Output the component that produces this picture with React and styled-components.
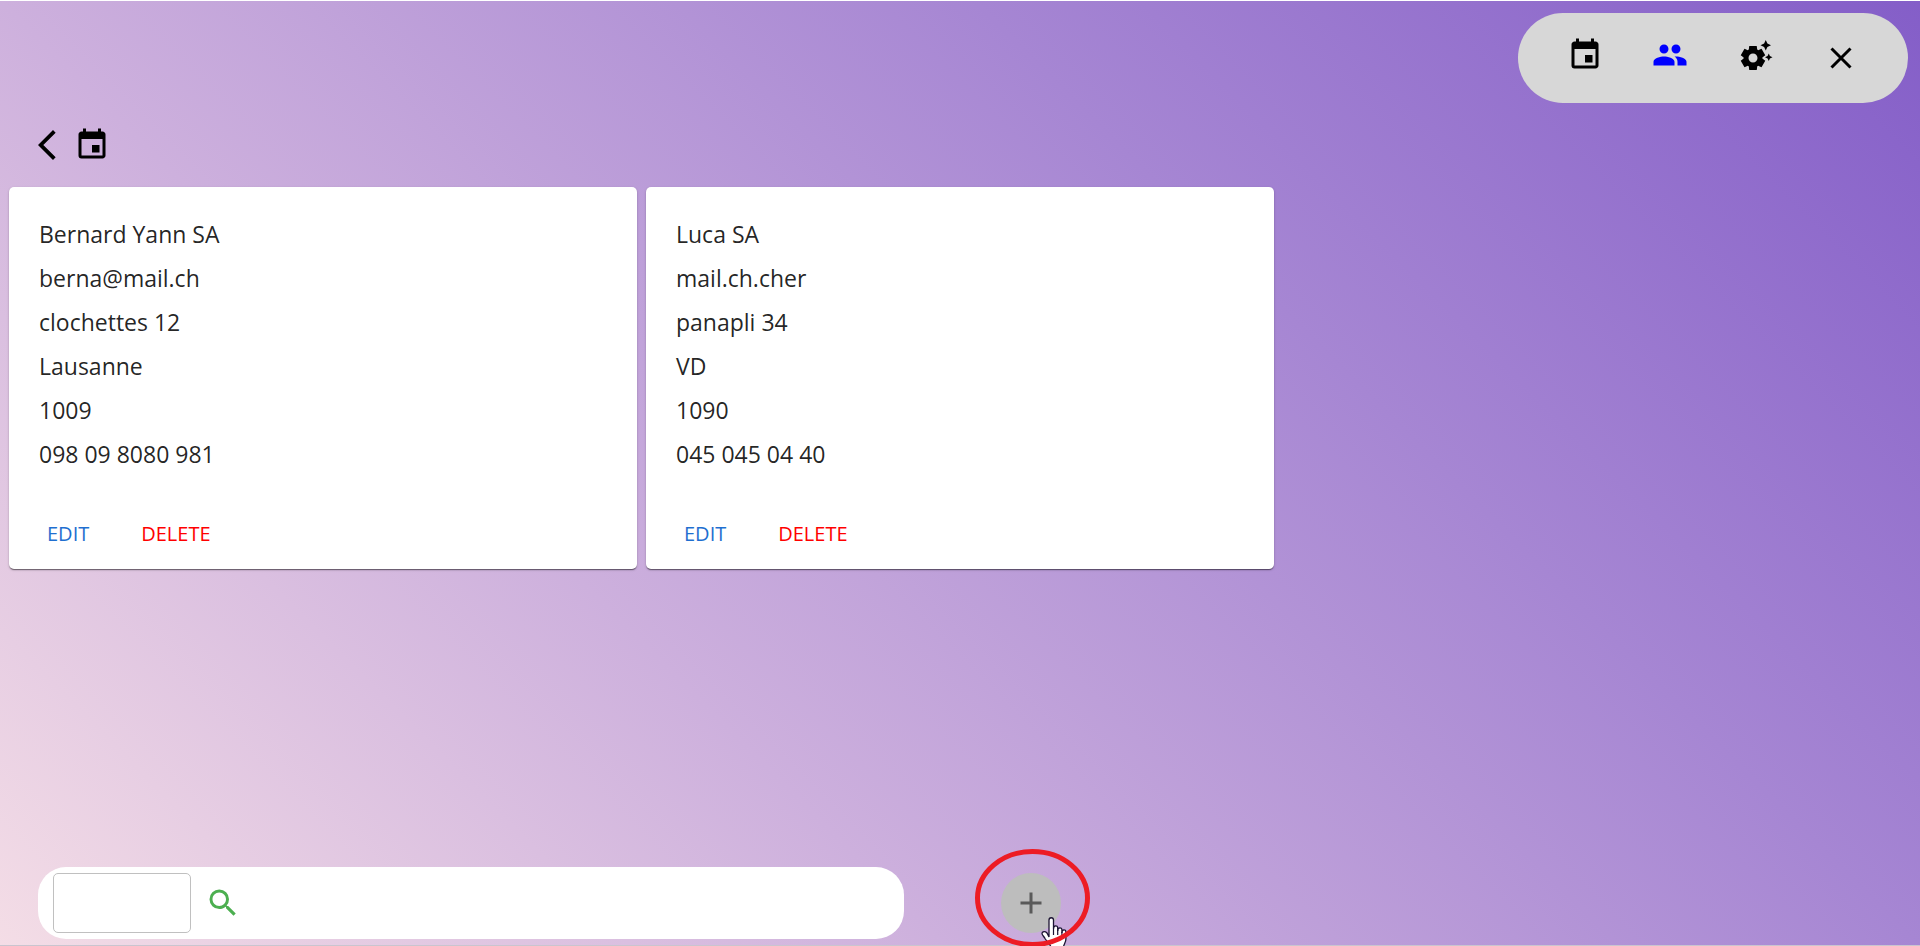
import React from "react";
import styled, { createGlobalStyle } from "styled-components";
import {
  MdAdd,
  MdArrowBackIosNew,
  MdEvent,
  MdPeople,
  MdSearch,
  MdSettingsSuggest,
} from "react-icons/md";

const GlobalStyle = createGlobalStyle`
  *, *::before, *::after { box-sizing: border-box; }
  body {
    margin: 0;
    font-family: "Open Sans", "Noto Sans", sans-serif;
    color: rgba(0, 0, 0, 0.87);
  }
  svg { display: block; }
`;

const Page = styled.div`
  min-height: 100vh;
  display: flex;
  flex-direction: column;
  border-top: 1px solid #fff;
  border-bottom: 1px solid #c9c5cf;
  background: linear-gradient(45deg, #f4dde6 0%, #cdb0dd 33%, #a686d3 67%, #845ec8 100%);
`;

const TopBar = styled.header`
  display: flex;
  justify-content: flex-end;
  padding: 12px 12px 0;
`;

const NavPill = styled.nav`
  display: flex;
  align-items: center;
  justify-content: space-between;
  width: 390px;
  height: 90px;
  padding: 0 49px 6px;
  border-radius: 45px;
  background: #d7d7d7;
`;

const IconButton = styled.button`
  padding: 0;
  border: 0;
  background: none;
  font-size: 36px;
  line-height: 0;
  color: ${({ $color }) => $color || "#000"};
  cursor: pointer;
`;

const CloseButton = styled(IconButton)`
  padding-top: 6px;
`;

const Breadcrumb = styled.div`
  display: flex;
  align-items: center;
  gap: 9px;
  padding: 24px 29px;
`;

const CardGrid = styled.main`
  display: grid;
  grid-template-columns: repeat(3, 1fr);
  gap: 9px;
  padding: 0 9px;
`;

const Card = styled.article`
  border-radius: 5px;
  background: #fff;
  box-shadow: 0 2px 1px -1px rgba(0, 0, 0, 0.3), 0 1px 1px rgba(0, 0, 0, 0.24),
    0 1px 3px rgba(0, 0, 0, 0.16);
  padding: 25px 30px 11px;
`;

const Line = styled.p`
  margin: 0;
  font-size: 23px;
  line-height: 44px;
`;

const Actions = styled.div`
  display: flex;
  gap: 36px;
  padding-top: 32px;
`;

const TextButton = styled.button`
  height: 50px;
  padding: 0 8px;
  border: 0;
  background: none;
  font: inherit;
  font-size: 20px;
  color: ${({ $color }) => $color};
  cursor: pointer;
`;

const Footer = styled.footer`
  display: flex;
  align-items: center;
  gap: 97px;
  margin-top: auto;
  padding: 0 0 6px 38px;
`;

const SearchBar = styled.form`
  display: flex;
  align-items: center;
  gap: 14px;
  flex: 0 0 46%;
  height: 72px;
  padding: 0 15px;
  border-radius: 28px;
  background: #fff;
`;

const SearchInput = styled.input`
  width: 138px;
  height: 60px;
  padding: 0 14px;
  border: 1px solid #c0c0c0;
  border-radius: 5px;
  background: #fff;
  font: inherit;
  font-size: 20px;
`;

const AddWrap = styled.div`
  position: relative;
`;

const AddButton = styled.button`
  display: flex;
  align-items: center;
  justify-content: center;
  width: 60px;
  height: 60px;
  padding: 0;
  border: 0;
  border-radius: 50%;
  background: #bdbdbd;
  color: #5a5a5a;
  font-size: 36px;
  cursor: pointer;
`;

const Marker = styled.svg`
  position: absolute;
  left: -26px;
  top: -24px;
  pointer-events: none;
`;

const clients = [
  ["Bernard Yann SA", "berna@mail.ch", "clochettes 12", "Lausanne", "1009", "098 09 8080 981"],
  ["Luca SA", "mail.ch.cher", "panapli 34", "VD", "1090", "045 045 04 40"],
];

export default function App() {
  return (
    <Page>
      <GlobalStyle />
      <TopBar>
        <NavPill aria-label="Main">
          <IconButton type="button" aria-label="Calendar"><MdEvent /></IconButton>
          <IconButton type="button" aria-label="Clients" $color="#0000ff"><MdPeople /></IconButton>
          <IconButton type="button" aria-label="Settings"><MdSettingsSuggest /></IconButton>
          <CloseButton type="button" aria-label="Close">
            <svg width="36" height="36" viewBox="0 0 36 36" fill="none" stroke="currentColor" strokeWidth="3">
              <path d="M8.500 8.500l19 19M27.500 8.500l-19 19" />
            </svg>
          </CloseButton>
        </NavPill>
      </TopBar>
      <Breadcrumb>
        <IconButton type="button" aria-label="Back"><MdArrowBackIosNew /></IconButton>
        <IconButton type="button" aria-label="Open calendar"><MdEvent /></IconButton>
      </Breadcrumb>
      <CardGrid>
        {clients.map((lines) => (
          <Card key={lines[0]}>
            {lines.map((line) => <Line key={line}>{line}</Line>)}
            <Actions>
              <TextButton type="button" $color="#1f6fd0">EDIT</TextButton>
              <TextButton type="button" $color="#ff0000">DELETE</TextButton>
            </Actions>
          </Card>
        ))}
      </CardGrid>
      <Footer>
        <SearchBar role="search" onSubmit={(e) => e.preventDefault()}>
          <SearchInput type="text" aria-label="Search clients" />
          <IconButton type="submit" aria-label="Search" $color="#4caf50"><MdSearch /></IconButton>
        </SearchBar>
        <AddWrap>
          <AddButton type="button" aria-label="Add client"><MdAdd /></AddButton>
          <Marker width="116" height="97" viewBox="0 0 116 97" fill="none" aria-hidden="true">
            <path
              d="M74 88V71c0-3 4.500-3 4.500 0v9c0-4 4.200-4 4.200-1v3c0-4 4.200-4 4.200-1v3c0-4 4-4 4-1v7c0 4-2.500 5-2.500 9H76c0-4-4-6-6-9.500-1-2-3-3.500-3-5 0-2 3-2.500 5-.5z"
              fill="#fff"
              stroke="#1c1433"
              strokeWidth="1.300"
            />
            <path d="M78.500 80v6M82.700 81v5M86.900 83v4" stroke="#1c1433" strokeWidth="1.200" />
            <ellipse cx="57.500" cy="49" rx="55" ry="46.500" stroke="#ed1c24" strokeWidth="5" />
          </Marker>
        </AddWrap>
      </Footer>
    </Page>
  );
}
